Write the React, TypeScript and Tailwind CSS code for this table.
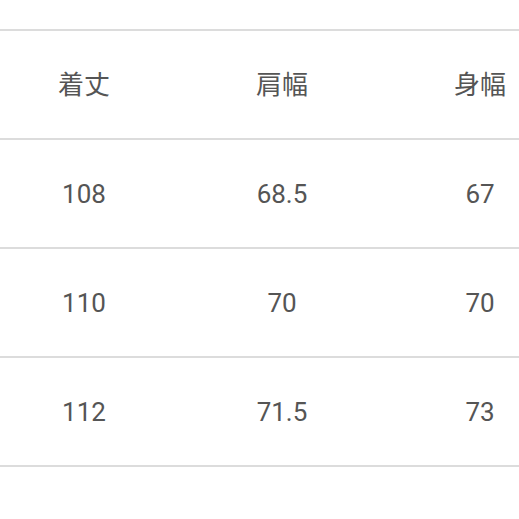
const HEADERS = ["着丈", "肩幅", "身幅"];

const ROWS = [
  ["108", "68.5", "67"],
  ["110", "70", "70"],
  ["112", "71.5", "73"],
];

function Row({ cells }: { cells: string[] }) {
  return (
    <div className="grid h-[109px] grid-cols-[198px_198px_198px] items-center border-b-2 border-[#dcdcdc] pt-[1px]">
      {cells.map((cell, i) => (
        <div key={i} className="text-center">
          {cell}
        </div>
      ))}
    </div>
  );
}

export default function App() {
  return (
    <div
      className="h-[519px] w-[519px] overflow-hidden bg-white pt-[29px] text-[26px] leading-none text-[#555555]"
      style={{ fontFamily: 'Roboto, "Noto Sans CJK JP", sans-serif' }}
    >
      <div className="-ml-[15px] w-[594px] border-t-2 border-[#dcdcdc]">
        <Row cells={HEADERS} />
        {ROWS.map((row) => (
          <Row key={row[0]} cells={row} />
        ))}
      </div>
    </div>
  );
}
